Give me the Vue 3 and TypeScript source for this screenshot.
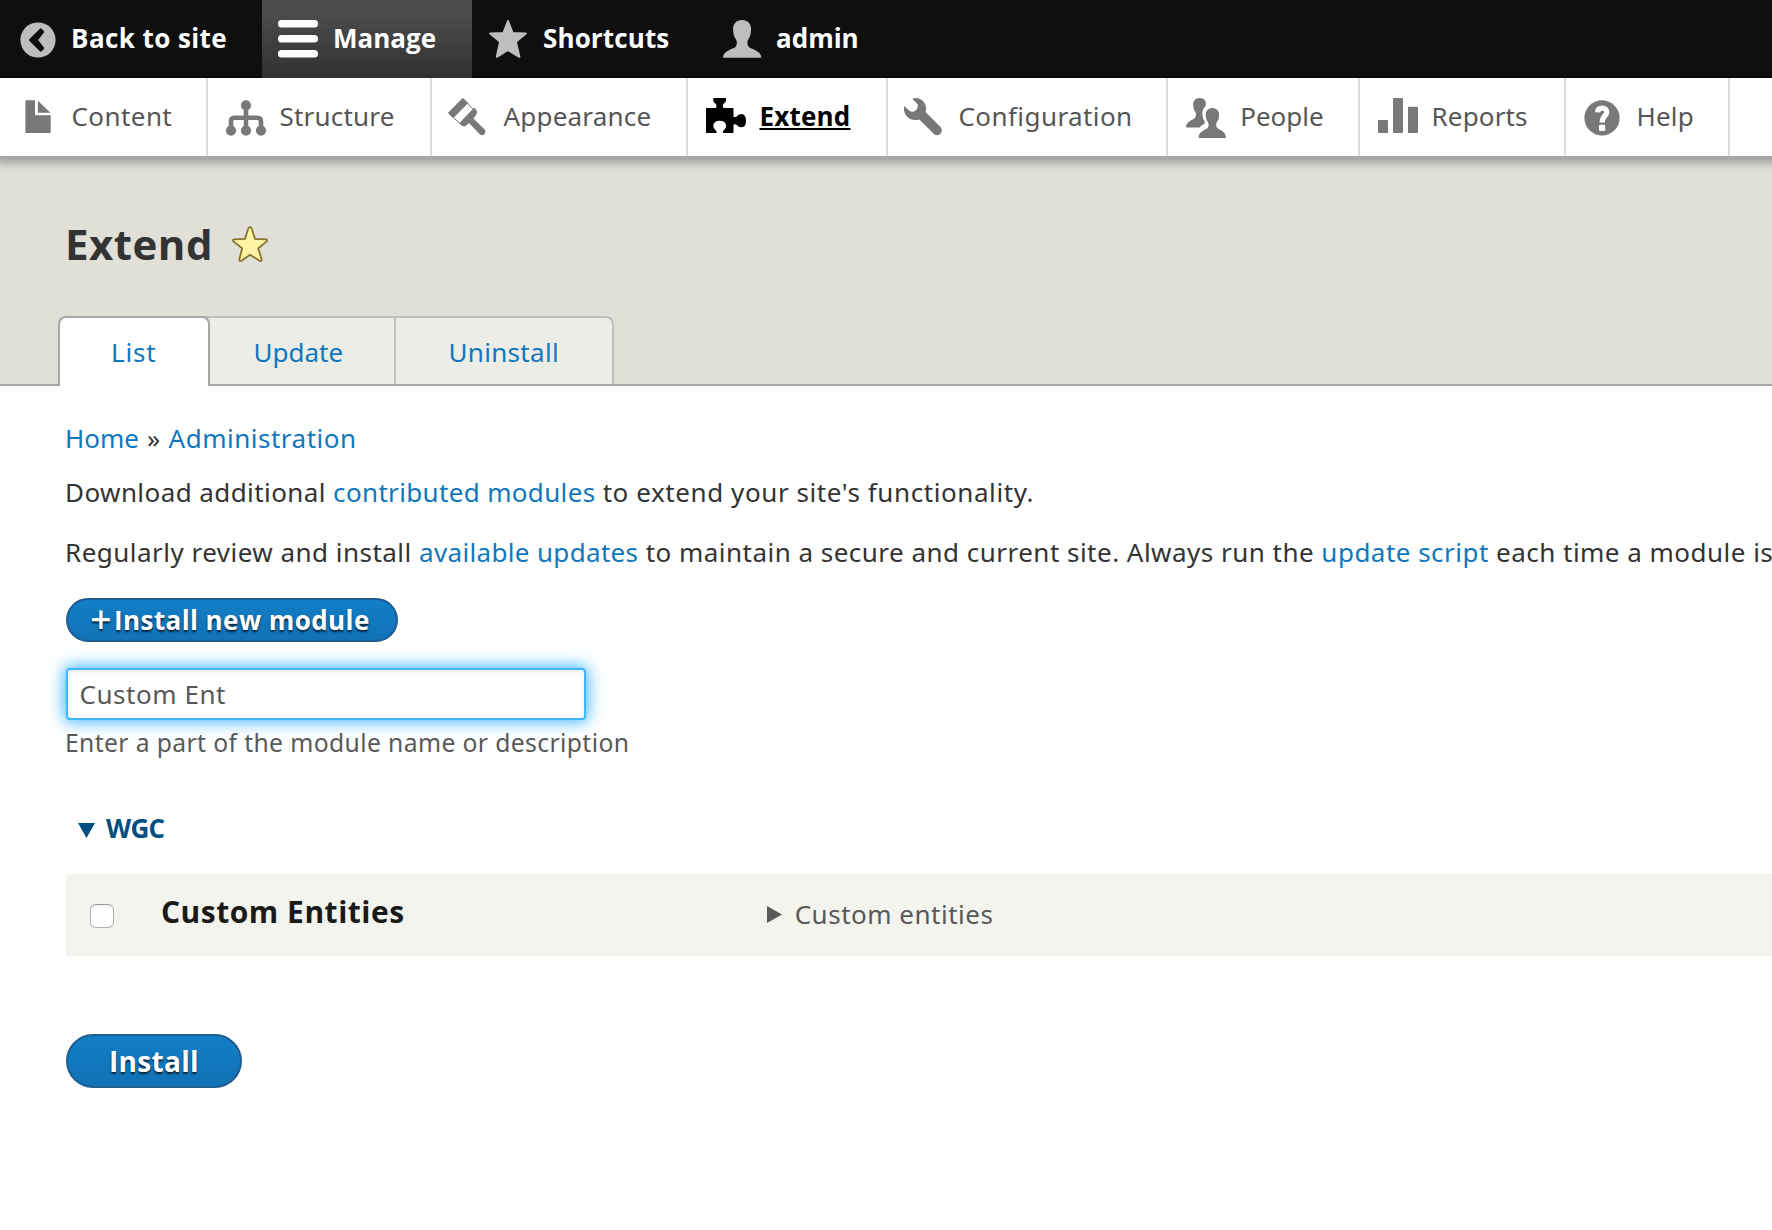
<script setup lang="ts">
import { ref } from 'vue'

const filter = ref('Custom Ent')
const enabled = ref(false)
</script>

<template>
  <div class="page">
    <nav class="bar">
      <a class="bar-item back">
        <svg class="icon" viewBox="0 0 71 78">
          <circle cx="38" cy="40" r="17.6" fill="#bebebe" />
          <path d="M30.4 40 40.8 29.6 42.9 31.8 36.6 40 42.9 48.2 40.8 50.4Z" fill="#0f0f0f" stroke="#0f0f0f" stroke-width="2.6" stroke-linejoin="round" />
        </svg>
        <span>Back to site</span>
      </a>
      <a class="bar-item manage">
        <svg class="icon" viewBox="0 0 71 78" fill="#fff">
          <rect x="16" y="20" width="40" height="7.6" rx="3.6" />
          <rect x="16" y="35" width="40" height="7.6" rx="3.6" />
          <rect x="16" y="50" width="40" height="7.6" rx="3.6" />
        </svg>
        <span>Manage</span>
      </a>
      <a class="bar-item shortcuts">
        <svg class="icon" viewBox="0 0 71 78">
          <path d="M36 21 40.7 33 53.8 33.6 43.9 41.8 47.4 56.8 36 50 24.8 56.8 28.1 41.8 18.2 33.6 31.3 33Z" fill="#bebebe" stroke="#bebebe" stroke-width="2" stroke-linejoin="round" />
        </svg>
        <span>Shortcuts</span>
      </a>
      <a class="bar-item account">
        <svg class="icon" viewBox="0 0 71 78">
          <path d="M37.1 20C31.5 20 28 23.8 28.1 29.5 28.2 34.5 29.6 37.5 31.3 39.8 32.3 42 32 45 30.6 46.8 28.5 49.3 18 50.3 18 57.8H56.3C56.3 50.3 45.8 49.3 43.7 46.8 42.3 45 42 42 43 39.8 44.7 37.5 46 34.5 46.1 29.5 46.2 23.8 42.7 20 37.1 20Z" fill="#bebebe" />
        </svg>
        <span>admin</span>
      </a>
    </nav>

    <nav class="tray">
      <a class="tray-item content">
        <svg class="icon" viewBox="0 0 71.5 78">
          <path d="M26.2 22.2H35V37.2H50.7V54.2Q50.7 55 49.9 55H26.2Q25.4 55 25.4 54.2V23Q25.4 22.2 26.2 22.2ZM37.9 22.8 50.4 34.8H37.9Z" />
        </svg>
        <span>Content</span>
      </a>
      <a class="tray-item structure">
        <svg class="icon" viewBox="0 0 71.5 78">
          <circle cx="38" cy="27.4" r="5.1" />
          <circle cx="23" cy="52.6" r="5.1" />
          <circle cx="38" cy="52.6" r="5.1" />
          <circle cx="53" cy="52.6" r="5.1" />
          <path d="M38 28V51M23 51V43.5Q23 39.7 26.5 39.7H49.5Q53 39.7 53 43.5V51" fill="none" stroke="#787878" stroke-width="4.6" />
        </svg>
        <span>Structure</span>
      </a>
      <a class="tray-item appearance">
        <svg class="icon" viewBox="0 0 71.5 78">
          <path d="M16 34.7 30.7 20 36 25.3 21.3 40Z" />
          <path d="M20.3 39 35 24.3M16.6 35.3 30.3 47.6M31.3 20.6 43.9 34.3" fill="none" stroke="#787878" stroke-width="1" />
          <path d="M42.3 29.6 44.9 32.9Q45.3 35.3 44.1 37L41.4 40.4 53 51.8Q54.2 54.8 52.3 56.6 50.3 58 48 56.6L36.9 44.9 34 47.7Q32.5 48.7 30.6 48L27.2 45.2Z" />
        </svg>
        <span>Appearance</span>
      </a>
      <a class="tray-item extend">
        <svg class="icon" viewBox="0 0 71.5 78">
          <path d="M25.4 20H37.9Q38.7 23.5 36.2 25.3 33.8 27.5 35.6 30H44.5Q45.5 30 45.5 31V38.7Q48 39.8 49.7 37.5 51 36 53.5 36 58 36.5 58 42.7 58 49 53.5 49.3 51 49.3 49.7 47.7 48 45.5 45.5 46.5V54Q45.5 55 44.5 55H35Q34.2 53.3 36 52 38.2 50.3 38.2 47.5 37.5 43 31.7 42.8 26 43 25.2 47.5 25.2 50.3 27.4 52 29.2 53.3 28.4 55H18V30H27.8Q29.5 27.5 27 25.3 24.6 23.5 25.4 20Z" />
        </svg>
        <span>Extend</span>
      </a>
      <a class="tray-item configuration">
        <svg class="icon" viewBox="0 0 71.5 78">
          <path d="M16.2 28 21.7 33Q24.5 34.6 27.6 32.5 30.4 30 29.7 26.3L24.2 20.8Q30 18.5 34.8 22.8 39.3 27.5 37.7 34.3L52.5 49Q54.8 52 53 55 50.5 58.5 46.5 56.5L31.3 41.5Q24 43.5 19.2 38.8 15 34.5 16.2 28Z" />
        </svg>
        <span>Configuration</span>
      </a>
      <a class="tray-item people">
        <svg class="icon" viewBox="0 0 71.5 78">
          <path d="M31.7 20C27.5 20 25 22.8 25.1 26.8 25.2 30.5 26.2 32.5 27.5 34.2 28.3 36 28 38.5 26.8 40 25 41.8 18 43.5 18 49.4H31.5Q33 47.5 35.6 46.2C37 45.5 37.4 44.5 36 42.3 33.8 38.5 33.5 31 37.6 28.3 38.8 23 36 20 31.7 20Z" />
          <path d="M44.4 30.1C40.2 30.1 37.6 33 37.7 37 37.8 40.5 38.8 42.8 40.2 44.5 41 46.3 40.7 48.5 39.5 49.9 37.5 51.9 30.6 53 30.6 60H58C58 53 51.3 51.9 49.3 49.9 48.1 48.5 47.8 46.3 48.6 44.5 50 42.8 51 40.5 51.1 37 51.2 33 48.6 30.1 44.4 30.1Z" />
        </svg>
        <span>People</span>
      </a>
      <a class="tray-item reports">
        <svg class="icon" viewBox="0 0 71.5 78">
          <rect x="18" y="42" width="10" height="13" rx="1" />
          <rect x="33" y="20" width="10" height="35" rx="1" />
          <rect x="48" y="28.7" width="10" height="26.3" rx="1" />
        </svg>
        <span>Reports</span>
      </a>
      <a class="tray-item help">
        <svg class="icon" viewBox="0 0 71.5 78">
          <circle cx="36" cy="39.9" r="17.6" />
          <path d="M31.5 34.3C31.7 31.3 33.7 30.1 36.1 30.1 38.9 30.1 40.8 31.7 40.8 34.1 40.8 37.8 36.1 38.1 36.1 44.5" fill="none" stroke="#fff" stroke-width="5.2" />
          <rect x="33" y="46.7" width="6.2" height="6.2" rx="1" fill="#fff" />
        </svg>
        <span>Help</span>
      </a>
    </nav>

    <header class="header">
      <div class="title-row">
        <h1>Extend</h1>
        <svg class="star" viewBox="0 0 38 38">
          <path d="M19 2.2Q20.2 2.2 20.6 3.3L24 13.8 35 14.3Q37 14.9 35.7 16.4L27.2 23.3 30.7 34.4Q30.8 36.5 28.9 35.9L19 29.8 10.2 35.9Q8.3 36.3 8.3 34.4L11.2 23.3 2.4 16.4Q1 14.7 3.2 14.3L14 13.8 17.4 3.3Q17.8 2.2 19 2.2Z" fill="#fff4a6" stroke="#85722c" stroke-width="1.8" />
        </svg>
      </div>
      <div class="tabs">
        <a class="tab active">List</a>
        <a class="tab update">Update</a>
        <a class="tab uninstall">Uninstall</a>
      </div>
    </header>

    <main class="main">
      <p class="breadcrumb"><a class="home">Home</a> » <a>Administration</a></p>
      <p class="intro">Download additional <a class="tight">contributed modules</a> <span class="tail">to extend your site's functionality.</span></p>
      <p class="intro second">Regularly review and install <a class="tight">available updates</a> to maintain a secure and current site. Always run the <a>update script</a> each time a module is</p>
      <button class="button action"><span class="plus">+</span><span>Install new module</span></button>
      <input v-model="filter" class="search" type="text" />
      <p class="description">Enter a part of the module name or description</p>
      <div class="group">
        <svg class="down" viewBox="0 0 17 15"><path d="M0 0H17L8.5 15Z" /></svg>
        <span>WGC</span>
      </div>
      <div class="row">
        <input v-model="enabled" class="check" type="checkbox" />
        <label class="name">Custom Entities</label>
        <div class="summary">
          <svg class="right" viewBox="0 0 15 17"><path d="M0 0L15 8.5 0 17Z" /></svg>
          <span>Custom entities</span>
        </div>
      </div>
      <button class="button install">Install</button>
    </main>
  </div>
</template>

<style>
body {
  background: #fff;
  overflow: hidden;
}
</style>

<style scoped>
.page {
  width: 1772px;
  height: 1230px;
  overflow: hidden;
  background: #fff;
  color: #333;
  font: 26px/40px "Noto Sans", "Open Sans", sans-serif;
  letter-spacing: 0.42px;
}
h1,
p {
  margin: 0;
}
a {
  color: #1077bd;
}
.icon {
  flex: none;
  height: 78px;
}
.bar {
  display: flex;
  height: 78px;
  background: linear-gradient(#0f0f0f 76px, #050505);
}
.bar-item {
  display: flex;
  flex: none;
  height: 78px;
  color: #fff;
  font-family: "Open Sans", sans-serif;
  font-weight: 700;
  line-height: 76px;
}
.bar-item .icon {
  width: 71px;
}
.back {
  width: 262px;
}
.manage {
  width: 210px;
  background: linear-gradient(#4b4b4b 20%, #303030);
  letter-spacing: 0;
}
.shortcuts {
  width: 233px;
  letter-spacing: 0.12px;
}
.account {
  letter-spacing: 0;
}
.tray {
  position: relative;
  display: flex;
  height: 78px;
  margin-right: -20px;
  background: #fff;
  border-bottom: 2px solid #a6a6a6;
  box-shadow: -2px 0 10px 4px rgba(0, 0, 0, 0.333);
  clip-path: inset(0 0 -30px 0);
}
.tray-item {
  box-sizing: border-box;
  display: flex;
  flex: none;
  border-right: 2px solid #ddd;
  color: #565656;
  fill: #787878;
  line-height: 76px;
}
.tray-item .icon {
  width: 71.5px;
}
.content {
  width: 208px;
}
.structure {
  width: 224px;
  letter-spacing: 0.2px;
}
.appearance {
  width: 256px;
  letter-spacing: 0.2px;
}
.extend {
  width: 200px;
  color: #000;
  fill: #000;
  font-family: "Open Sans", sans-serif;
  font-weight: 700;
  letter-spacing: 0.2px;
}
.extend span {
  text-decoration: underline;
  text-decoration-thickness: 2px;
  text-underline-offset: 2px;
}
.configuration {
  width: 280px;
}
.configuration span,
.help span {
  margin-left: -1px;
}
.people span {
  margin-left: 0.7px;
}
.people {
  width: 192px;
  letter-spacing: 0;
}
.reports {
  width: 206px;
  letter-spacing: 0.15px;
}
.help {
  width: 164px;
  letter-spacing: 0.2px;
}
.header {
  box-sizing: border-box;
  height: 228px;
  padding: 56px 0 0 58px;
  background: linear-gradient(#a6a6a6, #a6a6a6) bottom / 100% 2px no-repeat #e0e0d8;
}
.title-row {
  display: flex;
  height: 102px;
  padding-left: 7px;
}
h1 {
  width: 166px;
  font: 700 42px/60px "Open Sans", sans-serif;
  letter-spacing: 0.5px;
}
.star {
  width: 38px;
  height: 38px;
  margin-top: 11px;
}
.tabs {
  display: flex;
  height: 70px;
}
.tab {
  box-sizing: border-box;
  height: 68px;
  border: 2px solid #bfbfbf;
  border-width: 2px 2px 0 0;
  background: #ecede6;
  line-height: 69px;
}
.active {
  z-index: 1;
  width: 152px;
  height: 70px;
  padding-left: 51px;
  border-color: #a6a6a6;
  border-left-width: 2px;
  border-radius: 8px 8px 0 0;
  background: #fff;
  letter-spacing: 0.8px;
}
.update {
  width: 194px;
  margin-left: -8px;
  padding-left: 51.5px;
  letter-spacing: 0;
}
.uninstall {
  width: 218px;
  padding-left: 52.5px;
  border-radius: 0 8px 0 0;
  letter-spacing: 0.3px;
}
.main {
  display: flex;
  flex-direction: column;
  align-items: flex-start;
  padding: 32px 0 0 66px;
  white-space: nowrap;
}
.breadcrumb,
.intro,
.description {
  margin-left: -1px;
}
.breadcrumb {
  margin-bottom: 14px;
  word-spacing: 0.8px;
}
.home {
  letter-spacing: 0;
}
.breadcrumb a:last-child {
  letter-spacing: 0.5px;
}
.tight {
  letter-spacing: 0.34px;
}
.second {
  margin-top: 20px;
  letter-spacing: 0.48px;
}
.tail {
  letter-spacing: 0.58px;
}
.button {
  box-sizing: border-box;
  display: flex;
  padding: 0;
  border: 2px solid #1e5c90;
  border-radius: 27px;
  background: linear-gradient(#127ec6, #1171b5);
  color: #fff;
  font: 700 26px/40px "Open Sans", sans-serif;
  letter-spacing: 0.42px;
  text-shadow: 0 2px 2px rgba(0, 0, 0, 0.7);
}
.action {
  width: 332px;
  height: 44px;
  margin-top: 26px;
  padding-left: 20px;
  border-radius: 22px;
}
.plus {
  width: 26px;
  font-size: 37px;
  font-weight: 600;
  line-height: 38px;
}
.search {
  box-sizing: border-box;
  width: 520px;
  height: 52px;
  margin: 26px 0 4px;
  padding: 0 12px 0 11.5px;
  border: 2px solid #40b6ff;
  border-radius: 4px;
  outline: none;
  background: #fff;
  box-shadow: inset 0 2px 6px rgba(0, 0, 0, 0.08), 0 0 16px 2px #40b6ff;
  color: #595959;
  font: inherit;
  letter-spacing: 0.54px;
}
.description {
  color: #595959;
  font-size: 24.7px;
  letter-spacing: 0.38px;
  line-height: 37px;
}
.group {
  display: flex;
  align-items: center;
  margin: 47px 0 26px 12px;
  color: #004f80;
  fill: #004f80;
  font-family: "Open Sans", sans-serif;
  font-weight: 700;
  letter-spacing: -0.7px;
}
.down {
  width: 17px;
  height: 15px;
  margin: 4px 11px 0 0;
}
.row {
  box-sizing: border-box;
  display: flex;
  width: 1706px;
  height: 82px;
  background: #f3f4ee;
}
.check {
  appearance: none;
  box-sizing: border-box;
  width: 24px;
  height: 24px;
  margin: 30px 47px 0 24px;
  border: 1px solid #b0b0b0;
  border-top-color: #999;
  border-radius: 6px;
  background: linear-gradient(#f2f2f2, #fff 5px);
}
.name {
  width: 606px;
  padding-top: 18px;
  color: #1a1a1a;
  font: 700 30px/40px "Open Sans", sans-serif;
  letter-spacing: 0.5px;
}
.summary {
  display: flex;
  padding-top: 20px;
  color: #595959;
  fill: #595959;
  letter-spacing: 0.5px;
}
.right {
  width: 15px;
  height: 17px;
  margin: 12px 12.7px 0 0;
}
.install {
  width: 176px;
  height: 54px;
  margin-top: 78px;
  padding-left: 41px;
  font-size: 28px;
  letter-spacing: 0.3px;
  line-height: 50px;
}
</style>
